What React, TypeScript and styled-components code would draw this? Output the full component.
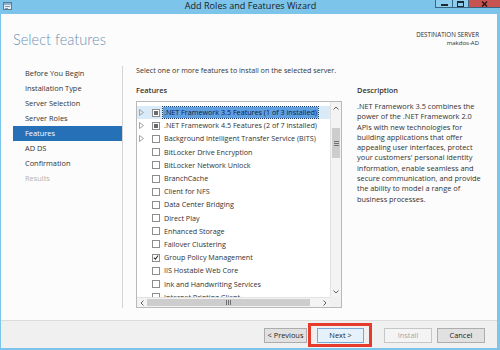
import styled, { createGlobalStyle } from "styled-components";

const FRAME = "#7cc4ea";
const UI_FONT = `"Open Sans", "Noto Sans", "Liberation Sans", sans-serif`;

const GlobalStyle = createGlobalStyle`
  html, body { margin: 0; padding: 0; }
  body {
    width: 500px;
    height: 350px;
    overflow: hidden;
    font-family: ${UI_FONT};
    color: #1e1e1e;
  }
`;

const steps = [
  "Before You Begin",
  "Installation Type",
  "Server Selection",
  "Server Roles",
  "Features",
  "AD DS",
  "Confirmation",
  "Results",
];

type Feature = { name: string; expandable?: boolean; state?: "partial" | "checked" };

const features: Feature[] = [
  { name: ".NET Framework 3.5 Features (1 of 3 installed)", expandable: true, state: "partial" },
  { name: ".NET Framework 4.5 Features (2 of 7 installed)", expandable: true, state: "partial" },
  { name: "Background Intelligent Transfer Service (BITS)", expandable: true },
  { name: "BitLocker Drive Encryption" },
  { name: "BitLocker Network Unlock" },
  { name: "BranchCache" },
  { name: "Client for NFS" },
  { name: "Data Center Bridging" },
  { name: "Direct Play" },
  { name: "Enhanced Storage" },
  { name: "Failover Clustering" },
  { name: "Group Policy Management", state: "checked" },
  { name: "IIS Hostable Web Core" },
  { name: "Ink and Handwriting Services" },
  { name: "Internet Printing Client" },
];

const descriptionLines = [
  ".NET Framework 3.5 combines the",
  "power of the .NET Framework 2.0",
  "APIs with new technologies for",
  "building applications that offer",
  "appealing user interfaces, protect",
  "your customers' personal identity",
  "information, enable seamless and",
  "secure communication, and provide",
  "the ability to model a range of",
  "business processes.",
];

export default function App() {
  return (
    <>
      <GlobalStyle />
      <Window>
        <TitleBar>
          <AppIcon width="9" height="8" viewBox="0 0 9 8">
            <rect x="0.5" y="0.5" width="8" height="7" fill="#e6eef5" stroke="#5b7a93" />
            <rect x="1" y="1" width="7" height="2" fill="#8fb2cf" />
            <rect x="2" y="4" width="5" height="1" fill="#7d96ab" />
            <rect x="2" y="6" width="3" height="1" fill="#7d96ab" />
          </AppIcon>
          <Title>Add Roles and Features Wizard</Title>
          <CaptionButtons>
            <CaptionButton $width={17}>
              <svg width="7" height="4" viewBox="0 0 7 4">
                <rect x="0" y="2" width="7" height="2" fill="#1c2a33" />
              </svg>
            </CaptionButton>
            <CaptionButton $width={16}>
              <svg width="7" height="6" viewBox="0 0 7 6">
                <rect x="0.5" y="0.5" width="6" height="5" fill="none" stroke="#1c2a33" />
                <rect x="0.5" y="0.5" width="6" height="1.5" fill="#1c2a33" />
              </svg>
            </CaptionButton>
            <CaptionButton $width={32} $close>
              <svg width="7" height="6" viewBox="0 0 7 6">
                <path d="M1 0.5 L6 5.5 M6 0.5 L1 5.5" stroke="#2b1414" strokeWidth="1.4" />
              </svg>
            </CaptionButton>
          </CaptionButtons>
        </TitleBar>

        <Body>
          <Header>
            <PageTitle>Select features</PageTitle>
            <Destination>
              <DestLabel>DESTINATION SERVER</DestLabel>
              <DestName>makdos-AD</DestName>
            </Destination>
          </Header>

          <Main>
            <StepNav>
              {steps.map((s) => (
                <Step key={s} $active={s === "Features"} $disabled={s === "Results"}>
                  {s}
                </Step>
              ))}
            </StepNav>

            <Content>
              <Intro>Select one or more features to install on the selected server.</Intro>
              <SectionLabel>Features</SectionLabel>
              <SectionLabel>Description</SectionLabel>

              <ListBox>
                <Rows>
                  {features.map((f, i) => (
                    <Row key={f.name} $selected={i === 0}>
                      <Expander>
                        {f.expandable && (
                          <svg width="5" height="7" viewBox="0 0 5 7">
                            <path d="M0.5 0.5 L4.5 3.5 L0.5 6.5 Z" fill="none" stroke="#a3a3a3" />
                          </svg>
                        )}
                      </Expander>
                      <CheckBox>
                        {f.state === "partial" && <PartialMark />}
                        {f.state === "checked" && (
                          <svg width="7" height="7" viewBox="0 0 7 7">
                            <path d="M1 3.6 L2.8 5.4 L6 1.2" fill="none" stroke="#2a2a2a" strokeWidth="1.2" />
                          </svg>
                        )}
                      </CheckBox>
                      <RowLabel $selected={i === 0}>{f.name}</RowLabel>
                    </Row>
                  ))}
                </Rows>

                <VScroll>
                  <ScrollArrow $h={11}>
                    <svg width="6" height="4" viewBox="0 0 6 4">
                      <path d="M0.5 3.5 L3 1 L5.5 3.5" fill="none" stroke="#606060" />
                    </svg>
                  </ScrollArrow>
                  <VTrack>
                    <VThumb>
                      <svg width="5" height="5" viewBox="0 0 5 5">
                        <path d="M0 0.5 H5 M0 2.5 H5 M0 4.5 H5" stroke="#707070" />
                      </svg>
                    </VThumb>
                  </VTrack>
                  <ScrollArrow $h={11}>
                    <svg width="6" height="4" viewBox="0 0 6 4">
                      <path d="M0.5 0.5 L3 3 L5.5 0.5" fill="none" stroke="#606060" />
                    </svg>
                  </ScrollArrow>
                </VScroll>

                <HScroll>
                  <ScrollArrow $w={10}>
                    <svg width="4" height="6" viewBox="0 0 4 6">
                      <path d="M3.5 0.5 L1 3 L3.5 5.5" fill="none" stroke="#606060" />
                    </svg>
                  </ScrollArrow>
                  <HTrack>
                    <HThumb>
                      <svg width="5" height="5" viewBox="0 0 5 5">
                        <path d="M0.5 0 V5 M2.5 0 V5 M4.5 0 V5" stroke="#707070" />
                      </svg>
                    </HThumb>
                  </HTrack>
                  <ScrollArrow $w={11}>
                    <svg width="4" height="6" viewBox="0 0 4 6">
                      <path d="M0.5 0.5 L3 3 L0.5 5.5" fill="none" stroke="#606060" />
                    </svg>
                  </ScrollArrow>
                </HScroll>
                <Corner />
              </ListBox>

              <Description>
                {descriptionLines.map((l) => (
                  <DescLine key={l}>{l}</DescLine>
                ))}
              </Description>
            </Content>
          </Main>
        </Body>

        <Footer>
          <ButtonGroup $gap={10}>
            <Button $width={43}>&lt; Previous</Button>
            <NextWrap>
              <Button $width={47} $focused>Next &gt;</Button>
              <Highlight />
            </NextWrap>
          </ButtonGroup>
          <ButtonGroup $gap={5}>
            <Button $width={48} disabled>Install</Button>
            <Button $width={48}>Cancel</Button>
          </ButtonGroup>
        </Footer>
      </Window>
    </>
  );
}

const Window = styled.div`
  width: 500px;
  height: 350px;
  box-sizing: border-box;
  padding: 0 3px 2px 1px;
  background: ${FRAME};
  display: flex;
  flex-direction: column;
`;

const TitleBar = styled.div`
  height: 14px;
  flex: none;
  margin-right: -3px;
  display: grid;
  grid-template-columns: 1fr auto 1fr;
  align-items: start;
`;

const AppIcon = styled.svg`
  margin: 2px 0 0 2px;
`;

const Title = styled.div`
  font-size: 9.1px;
  line-height: 11px;
  color: #1b1b1b;
`;

const CaptionButtons = styled.div`
  display: flex;
  justify-content: flex-end;
`;

const CaptionButton = styled.div<{ $width: number; $close?: boolean }>`
  width: ${(p) => p.$width}px;
  height: 8px;
  box-sizing: border-box;
  display: flex;
  align-items: center;
  justify-content: center;
  background: ${(p) => (p.$close ? "#c75450" : "#8fcdee")};
  border-left: 1px solid #3c6580;
  border-bottom: 1px solid #3c6580;
`;

const Body = styled.div`
  flex: 1;
  min-height: 0;
  background: #fcfcfc;
  display: flex;
  flex-direction: column;
`;

const Header = styled.div`
  height: 50px;
  flex: none;
  box-sizing: border-box;
  padding: 16px 18px 0 12px;
  display: flex;
  justify-content: space-between;
  align-items: flex-start;
`;

const PageTitle = styled.h1`
  margin: 0;
  font-family: Lato, "Open Sans", sans-serif;
  font-size: 14.6px;
  line-height: 20px;
  font-weight: 300;
  color: #6d92b6;
`;

const Destination = styled.div`
  margin-top: 1px;
  text-align: right;
  color: #2a2a2a;
`;

const DestLabel = styled.div`
  font-size: 6.2px;
  line-height: 8px;
`;

const DestName = styled.div`
  font-size: 6px;
  line-height: 8px;
`;

const Main = styled.div`
  flex: 1;
  margin-bottom: 12px;
  display: flex;
  min-height: 0;
`;

const StepNav = styled.nav`
  width: 109px;
  margin: 2px 0 0 12px;
  border-right: 1px solid #d4d4d4;
`;

const Step = styled.div<{ $active?: boolean; $disabled?: boolean }>`
  height: 15px;
  padding-left: 12px;
  font-size: 7.4px;
  line-height: 15px;
  white-space: nowrap;
  background: ${(p) => (p.$active ? "#2670b8" : "transparent")};
  color: ${(p) => (p.$active ? "#ffffff" : p.$disabled ? "#b3b3b3" : "#333333")};
`;

const Content = styled.div`
  flex: 1;
  margin: 0 12px 0 13px;
  display: grid;
  grid-template-columns: 206px 1fr;
  grid-template-rows: 12px 12px 1fr;
  column-gap: 15px;
  min-height: 0;
`;

const Intro = styled.div`
  grid-column: 1 / 2;
  font-size: 7.15px;
  line-height: 12px;
  white-space: nowrap;
  color: #333333;
`;

const SectionLabel = styled.div`
  margin-top: 8px;
  font-size: 7.4px;
  line-height: 12px;
  font-weight: 600;
  color: #333333;
  grid-row: 2;
`;

const ListBox = styled.div`
  margin-top: 13px;
  grid-row: 3;
  border: 1px solid #b9b9b9;
  background: #ffffff;
  display: grid;
  grid-template-columns: 1fr 11px;
  grid-template-rows: 1fr 10px;
  min-height: 0;
`;

const Rows = styled.div`
  padding-top: 4px;
  overflow: hidden;
  min-height: 0;
`;

const Row = styled.div<{ $selected?: boolean }>`
  height: 13.2px;
  display: flex;
  align-items: center;
  background: ${(p) => (p.$selected ? "#d9ebf9" : "transparent")};
`;

const Expander = styled.div`
  width: 15px;
  padding-left: 2px;
  box-sizing: border-box;
  display: flex;
  align-items: center;
`;

const CheckBox = styled.div`
  width: 8px;
  height: 8px;
  box-sizing: border-box;
  border: 1px solid #8d8d8d;
  background: #ffffff;
  display: flex;
  align-items: center;
  justify-content: center;
`;

const PartialMark = styled.div`
  width: 4px;
  height: 4px;
  background: #6b6b6b;
`;

const RowLabel = styled.span<{ $selected?: boolean }>`
  margin-left: 3px;
  padding: 0 1px;
  font-size: 7.2px;
  line-height: 11px;
  white-space: nowrap;
  color: ${(p) => (p.$selected ? "#0f2238" : "#333333")};
  background: ${(p) => (p.$selected ? "#5f9fe2" : "transparent")};
  outline: ${(p) => (p.$selected ? "1px dotted #1b3d66" : "none")};
`;

const VScroll = styled.div`
  background: #f3f3f3;
  border-left: 1px solid #e2e2e2;
  display: flex;
  flex-direction: column;
`;

const ScrollArrow = styled.div<{ $h?: number; $w?: number }>`
  flex: none;
  height: ${(p) => (p.$h ? `${p.$h}px` : "auto")};
  width: ${(p) => (p.$w ? `${p.$w}px` : "auto")};
  display: flex;
  align-items: center;
  justify-content: center;
`;

const VTrack = styled.div`
  flex: 1;
  padding-top: 15px;
`;

const VThumb = styled.div`
  height: 30px;
  margin: 0 1px;
  background: #cdcdcd;
  display: flex;
  align-items: center;
  justify-content: center;
`;

const HScroll = styled.div`
  background: #f3f3f3;
  border-top: 1px solid #e2e2e2;
  display: flex;
`;

const HTrack = styled.div`
  flex: 1;
  display: flex;
  align-items: stretch;
  padding: 1px 0;
`;

const HThumb = styled.div`
  width: 163px;
  background: #cdcdcd;
  display: flex;
  align-items: center;
  justify-content: center;
`;

const Corner = styled.div`
  background: #f0f0f0;
`;

const Description = styled.div`
  grid-row: 3;
  grid-column: 2;
  margin-top: 13px;
  color: #333333;
  font-size: 7.4px;
  line-height: 10.3px;
`;

const DescLine = styled.div`
  white-space: nowrap;
`;

const Footer = styled.div`
  height: 28px;
  flex: none;
  box-sizing: border-box;
  background: #f0f0f0;
  border-top: 1px solid #dcdcdc;
  padding: 7px 12px 0 0;
  display: flex;
  justify-content: flex-end;
  align-items: flex-start;
  gap: 20px;
`;

const ButtonGroup = styled.div<{ $gap: number }>`
  display: flex;
  gap: ${(p) => p.$gap}px;
`;

const NextWrap = styled.div`
  position: relative;
  display: flex;
`;

const Button = styled.button<{ $width: number; $focused?: boolean }>`
  width: ${(p) => p.$width}px;
  height: 15px;
  padding: 0;
  box-sizing: border-box;
  font-family: ${UI_FONT};
  font-size: 7.4px;
  line-height: 13px;
  color: #1e1e1e;
  background: ${(p) => (p.$focused ? "#e5f1fb" : "#e1e1e1")};
  border: 1px solid ${(p) => (p.$focused ? "#7aa9d8" : "#adadad")};
  border-radius: 0;

  &:disabled {
    background: #f4f4f4;
    border-color: #c6c6c6;
    color: #a6a6a6;
  }
`;

const Highlight = styled.div`
  position: absolute;
  left: -9px;
  top: -5px;
  width: 64px;
  height: 24px;
  box-sizing: border-box;
  border: 3px solid #e53a2c;
  pointer-events: none;
`;
